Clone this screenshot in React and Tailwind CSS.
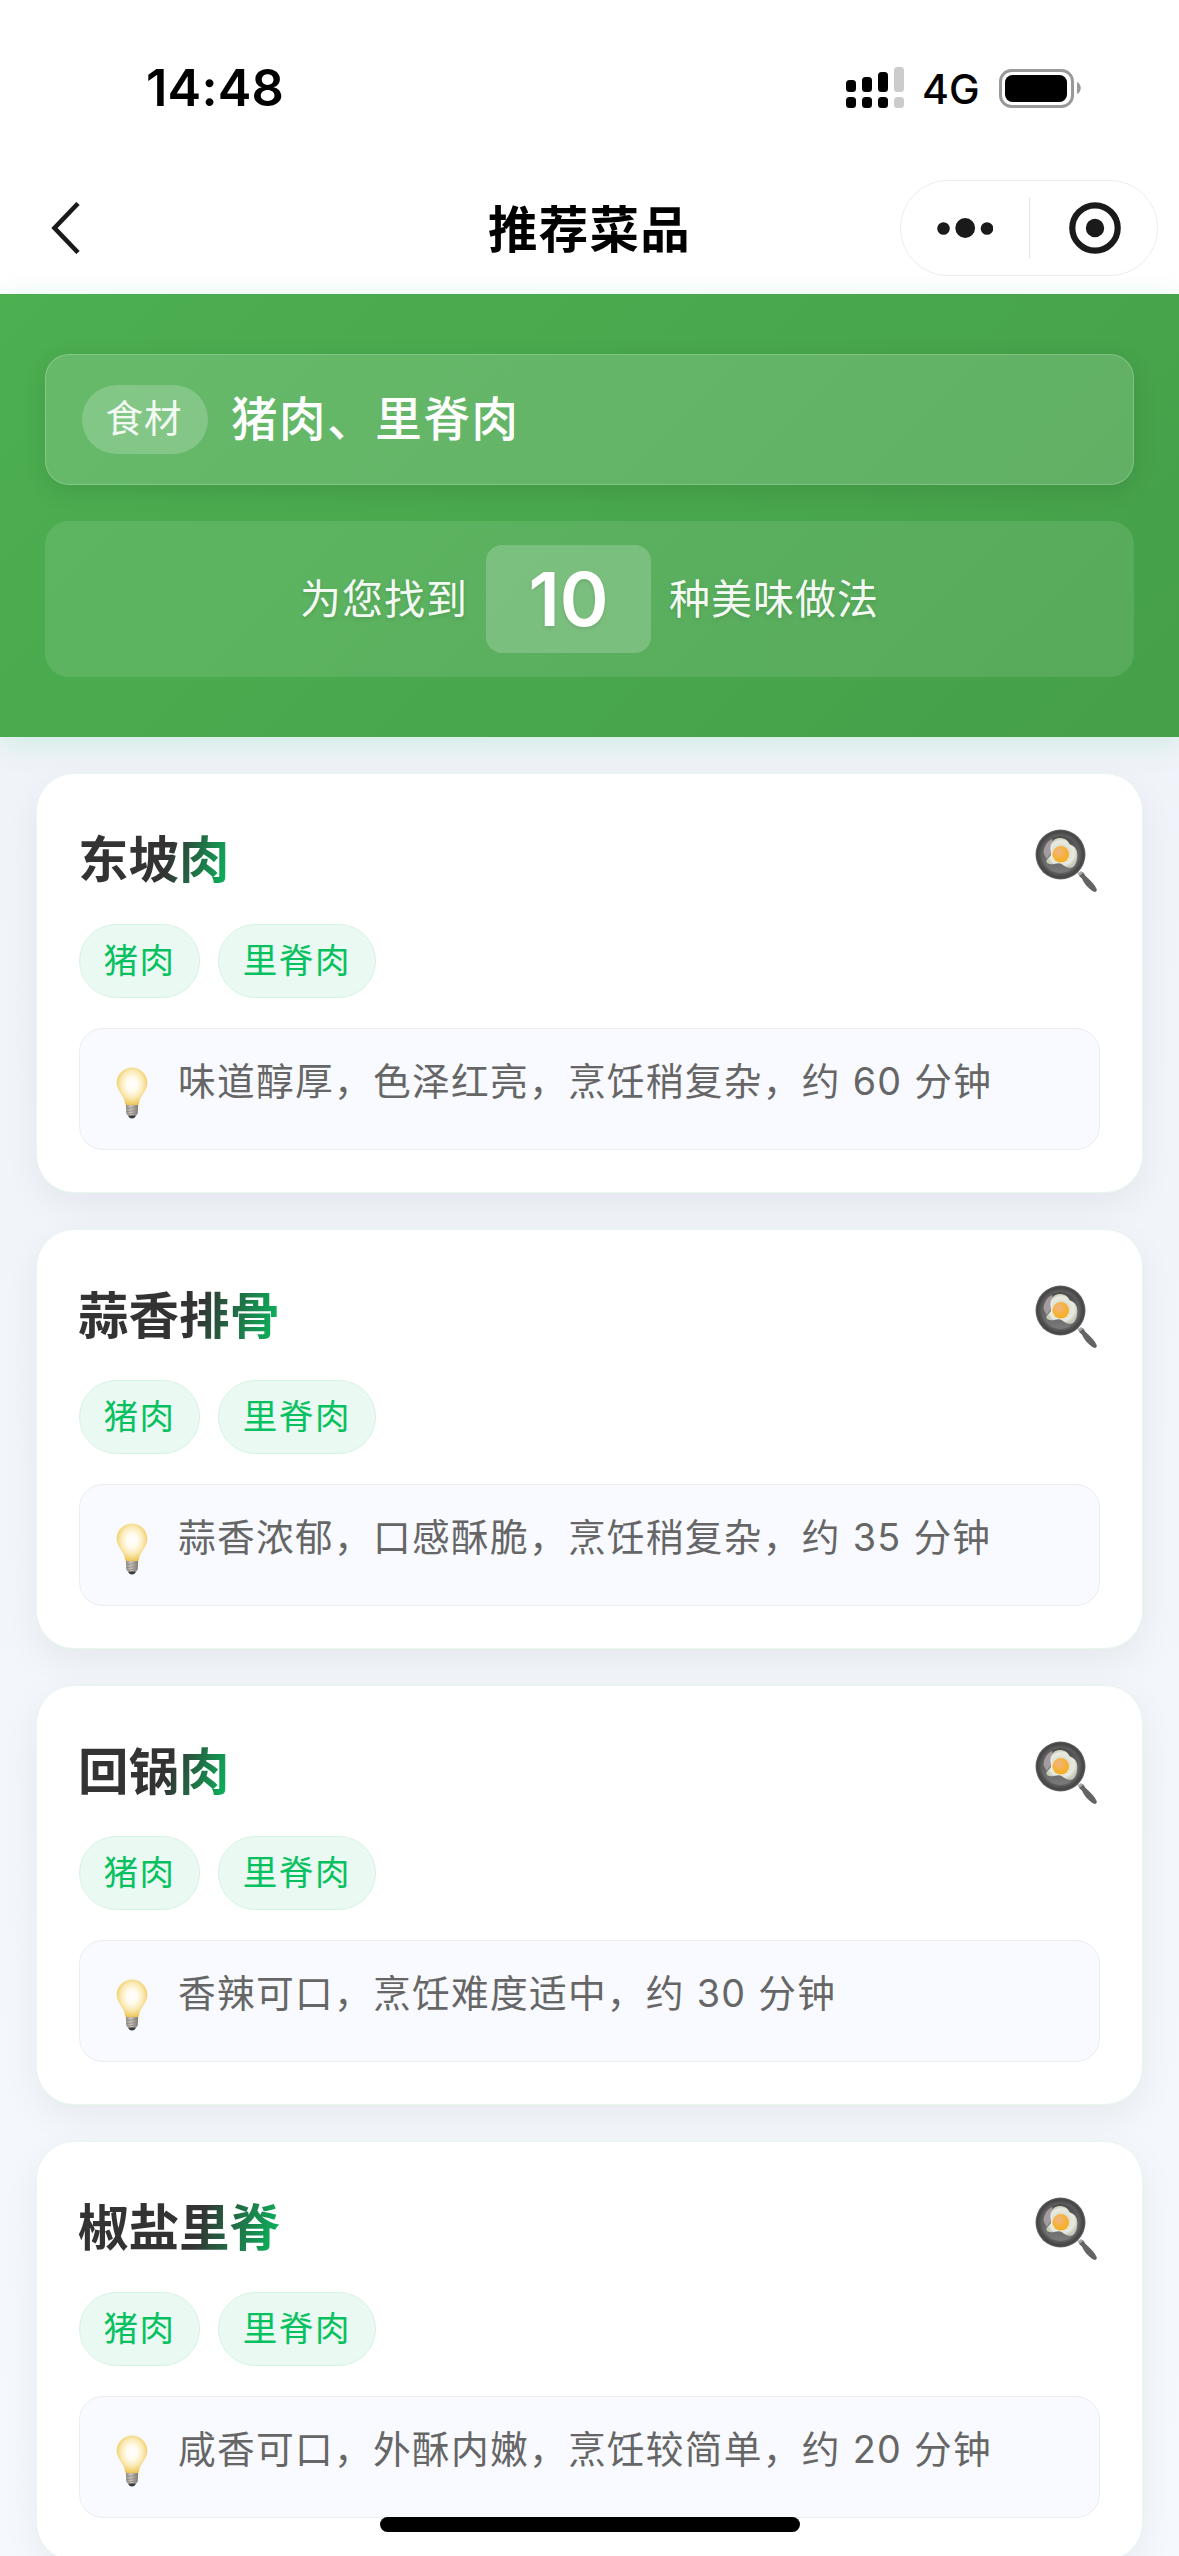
import React from 'react';

const dishes = [
  { name: '东坡肉', hint: '味道醇厚，色泽红亮，烹饪稍复杂，约 60 分钟' },
  { name: '蒜香排骨', hint: '蒜香浓郁，口感酥脆，烹饪稍复杂，约 35 分钟' },
  { name: '回锅肉', hint: '香辣可口，烹饪难度适中，约 30 分钟' },
  { name: '椒盐里脊', hint: '咸香可口，外酥内嫩，烹饪较简单，约 20 分钟' },
];

const tags = ['猪肉', '里脊肉'];

// Shared gradients, referenced by id from the pan and bulb icons
function IconDefs() {
  return (
    <svg width="0" height="0" className="absolute">
      <defs>
        <radialGradient id="panRim">
          <stop offset="0.7" stopColor="#6a6a6a" />
          <stop offset="0.8" stopColor="#575757" />
          <stop offset="0.92" stopColor="#434343" />
          <stop offset="1" stopColor="#6b6b6b" />
        </radialGradient>
        <linearGradient id="panBase" x1="0" y1="0" x2="0" y2="1">
          <stop offset="0" stopColor="#4c4c4c" />
          <stop offset="1" stopColor="#7a7a7a" />
        </linearGradient>
        <radialGradient id="eggWhite">
          <stop offset="0.4" stopColor="#dcddd2" />
          <stop offset="0.8" stopColor="#e9ebdf" />
          <stop offset="1" stopColor="#c8cdbb" />
        </radialGradient>
        <radialGradient id="yolk" cx="0.4" cy="0.35">
          <stop offset="0" stopColor="#efb58a" />
          <stop offset="0.5" stopColor="#f5b254" />
          <stop offset="1" stopColor="#f5b02c" />
        </radialGradient>
        <radialGradient id="bulbGlass" cx="0.5" cy="0.45" r="0.54">
          <stop offset="0" stopColor="#ffffff" />
          <stop offset="0.35" stopColor="#fffbee" />
          <stop offset="0.68" stopColor="#fae9b4" />
          <stop offset="0.88" stopColor="#f4d67c" />
          <stop offset="1" stopColor="#ecc659" />
        </radialGradient>
        <linearGradient id="bulbBase">
          <stop offset="0" stopColor="#8f8b84" />
          <stop offset="0.4" stopColor="#cbc6be" />
          <stop offset="1" stopColor="#7d7770" />
        </linearGradient>
      </defs>
    </svg>
  );
}

function PanIcon() {
  return (
    <svg width="64" height="64" viewBox="0 0 64 64">
      <path d="M43.500 46l4-3c1.200.8 2 2 2.700 3.500 3 3 8.300 7 11.500 13.500.6 2-1 3.400-2.800 2.800-5-2.800-9.500-7.800-12-13.300-1.200-.8-2.400-2-3.400-3.500z" fill="#646464" />
      <path d="M42.500 44.500l3.500-2.500 2 2-3.500 2.700z" fill="#a8a8a8" />
      <circle cx="25.500" cy="25.500" r="25" fill="url(#panRim)" />
      <circle cx="25.500" cy="25.500" r="18.500" fill="url(#panBase)" />
      <path d="M17 10c-5 2-8.500 8-8.500 14l3 6 5-6 1-13z" fill="#a29ba0" />
      <path
        d="M19 11c4-3 10-2.500 13 .5 2 2 2 3.500 4 4.500 5 2 6.500 6 6.300 11-.3 6-2.500 10.500-5.800 11.500-4.500 1-7-1.500-10-3.500-3-2-7 .5-10.500.3-3-.3-5-1.500-4.500-3.500.8-3 4.500-3.800 4.500-7.300 0-2.500-1-4-.5-7 .5-2.800 1.700-5 3.500-6.500z"
        fill="url(#eggWhite)"
      />
      <circle cx="25.800" cy="25.300" r="8.300" fill="url(#yolk)" />
    </svg>
  );
}

function BulbIcon() {
  return (
    <svg width="32" height="52" viewBox="0 0 32 52">
      <path d="M9.800 37h12.400l-.4 9c-.5 2-1.500 2.500-3 3h-5.600c-1.500-.5-2.500-1-3-3z" fill="url(#bulbBase)" />
      <path d="M10.500 41.500l11-1M10.500 44.500l11-1M11 47l10-1" stroke="#8d8880" strokeWidth=".8" />
      <path d="M12 48.500h8c-.8 1.800-2 3-4 3s-3.200-1.200-4-3z" fill="#3b3b3b" />
      <path
        d="M16 .5C7.500.5.7 7.200.7 15.700c0 5 2.300 8.300 4.800 12 2 3 3.300 6 3.800 9.300.1.600.5 1 1.200 1h11c.7 0 1.100-.4 1.200-1 .5-3.300 1.800-6.300 3.800-9.300 2.500-3.700 4.800-7 4.800-12C31.300 7.200 24.500.5 16 .5z"
        fill="url(#bulbGlass)"
      />
    </svg>
  );
}

function StatusBar() {
  return (
    <div className="h-[162px] pt-[48px] pl-[146px] pr-[98px] flex justify-between items-start">
      <span className="h-20 flex items-center text-[50.500px] font-semibold tracking-[0.2px] text-black">14:48</span>
      <div className="h-20 flex items-center">
        <svg width="58" height="42" viewBox="0 0 58 42">
          <rect x="0" y="13" width="10" height="12" rx="3.500" />
          <rect x="16" y="10" width="10" height="15" rx="3.500" />
          <rect x="32" y="5" width="10" height="20" rx="3.500" />
          <rect x="48" y="0" width="10" height="25" rx="3.500" fill="#ccc" />
          <rect x="0" y="30" width="10" height="11" rx="3.500" />
          <rect x="16" y="30" width="10" height="11" rx="3.500" />
          <rect x="32" y="30" width="10" height="11" rx="3.500" />
          <rect x="48" y="30" width="10" height="11" rx="3.500" fill="#ccc" />
        </svg>
        <span className="w-[59px] ml-[18px] mr-[18px] pt-[3px] text-[41px] font-medium text-black whitespace-nowrap">4G</span>
        <svg width="82" height="39" viewBox="0 0 82 39">
          <rect x="1.500" y="1.500" width="72" height="36" rx="11" fill="none" stroke="#999" strokeWidth="3" />
          <rect x="6" y="6" width="62" height="27" rx="7.500" />
          <path d="M78 13c5 2 5 10 0 12z" fill="#999" />
        </svg>
      </div>
    </div>
  );
}

function NavBar() {
  return (
    <div className="h-[132px] pl-[51px] pr-[21px] flex items-center justify-between">
      <div className="w-[258px]">
        <svg width="30" height="52" viewBox="0 0 30 52" fill="none" stroke="#1a1a1a" strokeWidth="4.600">
          <path d="M27 1.500L3.500 26L27 50.500" />
        </svg>
      </div>
      <h1 className="pt-1 pr-[30px] text-[49.500px] tracking-[1.200px] font-bold text-black whitespace-nowrap">推荐菜品</h1>
      <div className="w-[258px] h-24 rounded-full border border-[#ececec] flex items-center">
        <div className="w-[128px] flex justify-center">
          <svg width="56" height="20" viewBox="0 0 56 20" fill="#1a1a1a">
            <circle cx="6.500" cy="10.500" r="6.300" />
            <circle cx="28.200" cy="10" r="9.900" />
            <circle cx="50" cy="10.500" r="6.300" />
          </svg>
        </div>
        <div className="w-px h-[60px] bg-[#e3e3e3]" />
        <div className="flex-1 pl-0.5 flex justify-center">
          <svg width="52" height="52" viewBox="0 0 52 52">
            <circle cx="26" cy="26" r="22.700" fill="none" stroke="#1a1a1a" strokeWidth="6.200" />
            <circle cx="26" cy="26" r="9.200" fill="#1a1a1a" />
          </svg>
        </div>
      </div>
    </div>
  );
}

function Summary() {
  return (
    <div className="relative h-[443px] px-[45px] pt-[60px] bg-[linear-gradient(135deg,#4CAF50_0%,#45a049_100%)] shadow-[0_6px_30px_rgba(7,193,96,0.15)] text-white">
      <div className="h-[131px] px-9 flex items-center rounded-3xl border border-white/20 bg-white/15 shadow-[0_6px_24px_rgba(0,0,0,0.1)]">
        <span className="w-[126px] h-[69px] pr-0.5 flex items-center justify-center rounded-[36px] bg-white/20 text-[37.500px] tracking-[1px] text-white/90">食材</span>
        <span className="ml-[23px] text-[46.500px] tracking-[1.600px] font-medium">猪肉、里脊肉</span>
      </div>
      <div className="mt-9 h-[156px] flex items-center justify-center rounded-3xl bg-white/10 text-[41px] tracking-[1px] text-white/95 [text-shadow:0_2px_4px_rgba(0,0,0,0.1)]">
        <span className="pt-0.5">为您找到</span>
        <span className="ml-[18px] mr-[18px] w-[165px] h-[108px] flex items-center justify-center rounded-2xl bg-white/20 text-[74px] tracking-normal font-semibold text-white">10</span>
        <span className="pt-0.5">种美味做法</span>
      </div>
    </div>
  );
}

function DishCard({ name, hint }) {
  return (
    <div className="h-[420px] shrink-0 px-[42px] pt-[42px] rounded-[38px] border border-[#e6f7ee] bg-white shadow-[0_12px_36px_rgba(0,0,0,0.06)]">
      <div className="h-[88px] pr-px flex items-center justify-between">
        <h2 className="-ml-px text-[50.500px] leading-[70px] font-bold bg-[linear-gradient(105deg,#333_58%,#07c160_100%)] bg-clip-text text-transparent">{name}</h2>
        <div className="pt-0.5">
          <PanIcon />
        </div>
      </div>
      <div className="mt-5 flex gap-[18px]">
        {tags.map((tag) => (
          <span
            key={tag}
            className="h-[74px] px-[23.500px] flex items-center rounded-full border border-[#d6f3e4] bg-[#eaf9f2] text-[34.500px] tracking-[1.600px] text-[#07c160]"
          >
            {tag}
          </span>
        ))}
      </div>
      <div className="mt-[30px] h-[122px] pl-[36px] flex rounded-3xl border border-[#ebedf1] bg-[#f8faff]">
        <div className="pt-[38px]">
          <BulbIcon />
        </div>
        <p className="ml-[30px] pt-[22px] text-[37.700px] leading-[60px] tracking-[1.300px] text-[#666] whitespace-nowrap">{hint}</p>
      </div>
    </div>
  );
}

export default function App() {
  return (
    <div className="w-[1179px] h-[2556px] overflow-hidden flex flex-col bg-white font-['Inter','Noto_Sans_CJK_SC',sans-serif]">
      <IconDefs />
      <StatusBar />
      <NavBar />
      <Summary />
      <div className="flex-1 min-h-0 overflow-hidden px-9 pt-9 flex flex-col gap-9 bg-linear-to-b from-[#f0f3f9] to-[#f5f8fc]">
        {dishes.map((dish) => (
          <DishCard key={dish.name} {...dish} />
        ))}
      </div>
      {/* Home indicator */}
      <div className="fixed top-[2517px] left-[380px] w-[420px] h-[15px] rounded-full bg-black" />
    </div>
  );
}
